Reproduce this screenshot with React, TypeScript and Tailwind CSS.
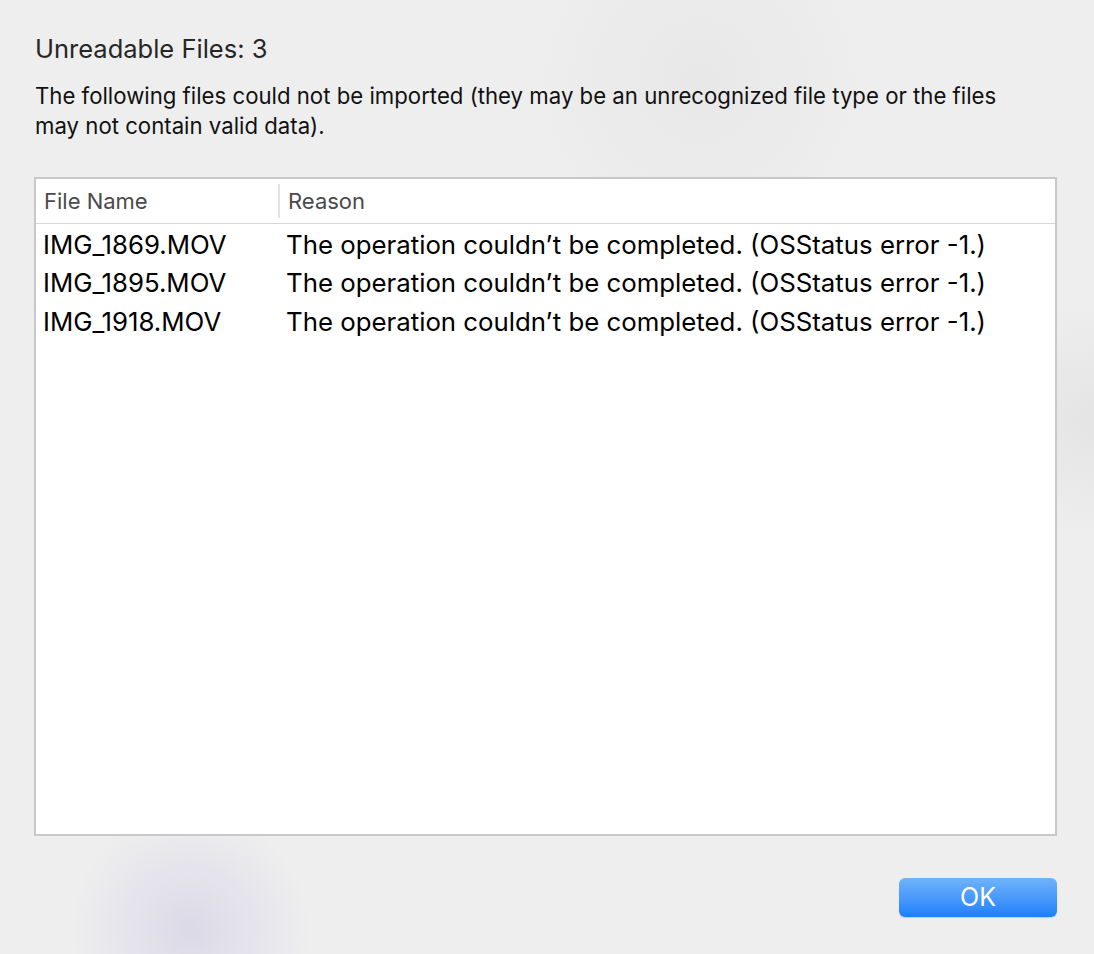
import React from 'react';

const rows = [
  { name: 'IMG_1869.MOV', reason: 'The operation couldn’t be completed. (OSStatus error -1.)' },
  { name: 'IMG_1895.MOV', reason: 'The operation couldn’t be completed. (OSStatus error -1.)' },
  { name: 'IMG_1918.MOV', reason: 'The operation couldn’t be completed. (OSStatus error -1.)' },
];

const App: React.FC = () => {
  return <div className="w-[1094px] h-[954px] overflow-hidden bg-[#eeeeee] bg-[radial-gradient(circle_at_190px_930px,#dcd9e8_0px,rgba(238,238,238,0)_120px),radial-gradient(circle_at_700px_80px,#e8e8e8_0px,rgba(238,238,238,0)_180px),radial-gradient(circle_at_1094px_420px,#e4e4e4_0px,rgba(238,238,238,0)_120px)] font-['Inter',sans-serif] text-black flex flex-col px-[34px]">
      <h1 className="mt-[33px] pl-[1px] text-[25.5px] leading-[32px] text-[#262626]">Unreadable Files: 3</h1>
      <p className="mt-[16px] pl-[1px] text-[22.2px] leading-[30px] w-[985px] text-[#111]">
        The following files could not be imported (they may be an unrecognized file type or the files may not contain valid data).
      </p>
      <div className="mt-[36px] w-[1023px] h-[659px] bg-white border-2 border-[#c8c8c8] flex flex-col">
        <div className="h-[45px] flex items-center border-b border-[#d6d6d6] text-[22px] text-[#4a4a4a]">
          <div className="w-[242px] pl-[8px]">File Name</div>
          <div className="h-[34px] w-[2px] bg-[#e2e2e2]" />
          <div className="pl-[8px]">Reason</div>
        </div>
        <div className="pt-[2px] flex flex-col">
          {rows.map(r => <div key={r.name} className="h-[38.5px] flex items-center text-[25.8px]">
              <div className="w-[244px] pl-[7px]">{r.name}</div>
              <div className="pl-[6px]">{r.reason}</div>
            </div>)}
        </div>
      </div>
      <div className="mt-[42px] w-[1023px] flex justify-end">
        <button className="w-[158px] h-[39px] rounded-[6px] bg-gradient-to-b from-[#6fb3fb] to-[#1b7ffb] text-white text-[25px] leading-none shadow-[0_1px_1px_rgba(0,0,0,0.15)]">OK</button>
      </div>
    </div>;
};

export default App;
